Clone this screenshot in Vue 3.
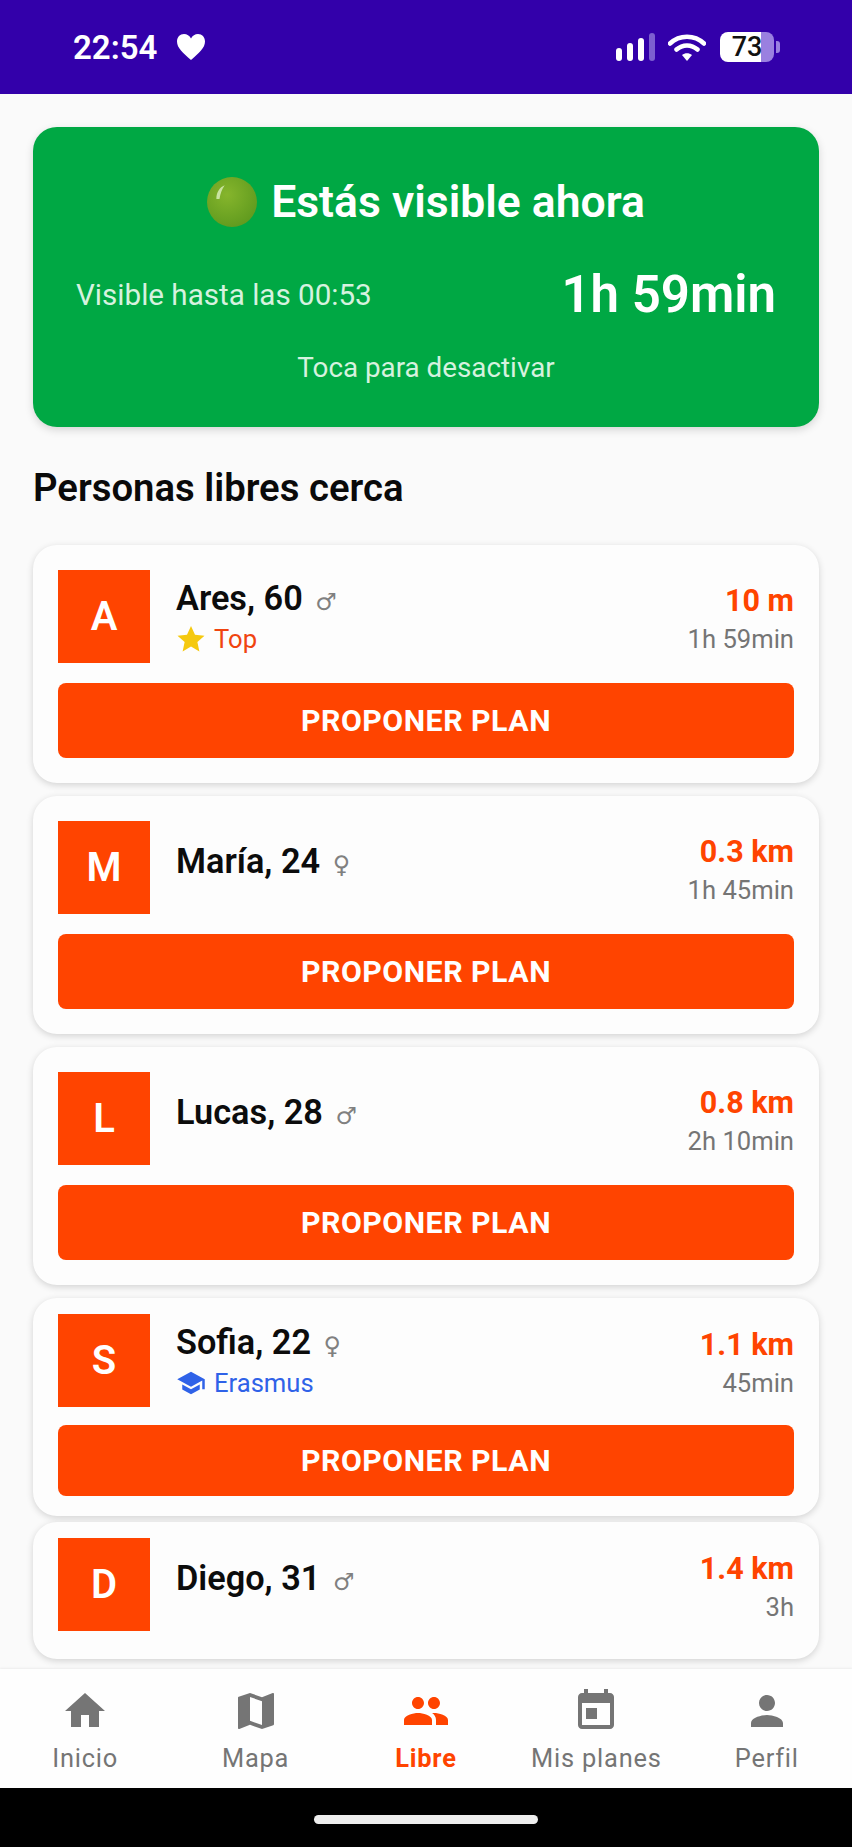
<script setup>
const people = [
  { initial: 'A', name: 'Ares, 60', gender: '♂', tag: 'top', distance: '10 m', time: '1h 59min', button: true },
  { initial: 'M', name: 'María, 24', gender: '♀', distance: '0.3 km', time: '1h 45min', button: true },
  { initial: 'L', name: 'Lucas, 28', gender: '♂', distance: '0.8 km', time: '2h 10min', button: true },
  { initial: 'S', name: 'Sofia, 22', gender: '♀', tag: 'erasmus', distance: '1.1 km', time: '45min', button: true, compact: true },
  { initial: 'D', name: 'Diego, 31', gender: '♂', distance: '1.4 km', time: '3h', button: false, compact: true }
]

const tabs = [
  { label: 'Inicio', path: 'M10 20v-6h4v6h5v-8h3L12 3 2 12h3v8z' },
  { label: 'Mapa', path: 'M20.5 3l-.16.03L15 5.1 9 3 3.36 4.9c-.21.07-.36.25-.36.48V20.5c0 .28.22.5.5.5l.16-.03L9 18.9l6 2.1 5.64-1.9c.21-.07.36-.25.36-.48V3.5c0-.28-.22-.5-.5-.5zM15 19l-6-2.11V5l6 2.11V19z' },
  { label: 'Libre', active: true, path: 'M16 11c1.66 0 2.99-1.34 2.99-3S17.66 5 16 5c-1.66 0-3 1.34-3 3s1.34 3 3 3zm-8 0c1.66 0 2.99-1.34 2.99-3S9.66 5 8 5C6.34 5 5 6.34 5 8s1.34 3 3 3zm0 2c-2.33 0-7 1.17-7 3.5V19h14v-2.5c0-2.33-4.67-3.5-7-3.5zm8 0c-.29 0-.62.02-.97.05 1.16.84 1.97 1.97 1.97 3.45V19h6v-2.5c0-2.33-4.67-3.5-7-3.5z' },
  { label: 'Mis planes', path: 'M12.500 10.500h-5.500v5.500h5.500v-5.500zM16 1v2H8V1H6v2H5c-1.110 0-1.990.9-1.990 2L3 19c0 1.100.89 2 2 2h14c1.100 0 2-.9 2-2V5c0-1.100-.9-2-2-2h-1V1h-2zm3 18H5V8h14v11z' },
  { label: 'Perfil', path: 'M12 12c2.210 0 4-1.790 4-4s-1.790-4-4-4-4 1.790-4 4 1.790 4 4 4zm0 2c-2.670 0-8 1.340-8 4v2h16v-2c0-2.660-5.330-4-8-4z' }
]
</script>

<template>
  <div class="screen">
    <header class="status">
      <span class="status__time">22:54</span>
      <svg class="status__heart" viewBox="0 0 28 26" width="28" height="26">
        <path d="M14 26C6 19 0 14 0 7.500 0 3 3 0 7 0c3 0 5.500 1.500 7 4.500C15.500 1.500 18 0 21 0c4 0 7 3 7 7.500C28 14 22 19 14 26z" fill="#fff" />
      </svg>
      <span class="status__spacer" />
      <svg class="status__signal" viewBox="0 0 39 28" width="39" height="28">
        <rect x="0" y="15" width="6" height="13" rx="3" fill="#fff" />
        <rect x="11" y="10" width="6" height="18" rx="3" fill="#fff" />
        <rect x="22" y="5" width="6" height="23" rx="3" fill="#fff" />
        <rect x="33" y="0" width="6" height="28" rx="3" fill="#7d5fd0" />
      </svg>
      <svg class="status__wifi" viewBox="0 0 38 28" width="38" height="28">
        <path d="M2 10.500C11.500 1.500 26.500 1.500 36 10.500M8.500 16.500C14.500 11 23.500 11 29.500 16.500" fill="none" stroke="#fff" stroke-width="4.500" stroke-linecap="round" />
        <path d="M19 28l-5-6c3-2.500 7-2.500 10 0z" fill="#fff" />
      </svg>
      <div class="status__battery">
        <span class="status__level">73</span>
      </div>
      <i class="status__nub" />
    </header>

    <main class="content">
      <section class="visible">
        <h1 class="visible__title">
          <svg viewBox="0 0 48 48" width="50" height="50">
            <defs>
              <radialGradient id="dot" cx="0.4" cy="0.35" r="0.7">
                <stop offset="0" stop-color="#86b52c" />
                <stop offset="1" stop-color="#5f9a1e" />
              </radialGradient>
            </defs>
            <circle cx="24" cy="24" r="24" fill="url(#dot)" />
            <path d="M9 21c0-6 3-11 8-13-3 4-4 8-5 13z" fill="#c9e3a0" />
          </svg>
          Estás visible ahora
        </h1>
        <div class="visible__row">
          <span class="visible__until">Visible hasta las 00:53</span>
          <strong class="visible__left">1h 59min</strong>
        </div>
        <p class="visible__hint">Toca para desactivar</p>
      </section>

      <h2 class="section-title">Personas libres cerca</h2>

      <div class="list">
        <article
          v-for="person in people"
          :key="person.initial"
          class="card"
          :class="{ 'card--compact': person.compact, 'card--last': !person.button }"
        >
          <div class="card__top">
            <div class="card__avatar">{{ person.initial }}</div>
            <div class="card__info" :class="{ 'card__info--tagged': person.tag }">
              <div class="card__name">{{ person.name }} <i>{{ person.gender }}</i></div>
              <div v-if="person.tag === 'top'" class="tag tag--top">
                <svg viewBox="0 0 24 24" width="30" height="30"><path d="M12 1.500l3.200 7 7.600.8-5.700 5.100 1.600 7.500L12 18l-6.700 3.900 1.600-7.500L1.200 9.300l7.600-.8z" fill="#f5c90f" /></svg>
                Top
              </div>
              <div v-if="person.tag === 'erasmus'" class="tag tag--erasmus">
                <svg viewBox="0 0 24 24" width="30" height="30"><path d="M5 13.180v4L12 21l7-3.820v-4L12 17l-7-3.820zM12 3L1 9l11 6 9-4.910V17h2V9L12 3z" fill="#2f62e8" /></svg>
                Erasmus
              </div>
            </div>
            <div class="card__meta">
              <strong>{{ person.distance }}</strong>
              <span>{{ person.time }}</span>
            </div>
          </div>
          <button v-if="person.button" class="card__button">PROPONER PLAN</button>
        </article>
      </div>
    </main>

    <nav class="tabs">
      <div v-for="tab in tabs" :key="tab.label" class="tab" :class="{ 'tab--active': tab.active }">
        <svg viewBox="0 0 24 24" width="48" height="48"><path :d="tab.path" fill="currentColor" /></svg>
        <span>{{ tab.label }}</span>
      </div>
    </nav>

    <footer class="home-bar"><i /></footer>
  </div>
</template>

<style>
html,
body {
  margin: 0;
  background: #fafafa;
}
</style>

<style scoped>
.screen {
  display: flex;
  flex-direction: column;
  width: 852px;
  height: 1847px;
  overflow: hidden;
  background: #fafafa;
  font-family: Roboto, "Liberation Sans", sans-serif;
}

.status {
  display: flex;
  flex: none;
  align-items: center;
  height: 94px;
  padding: 0 72px 0 73px;
  box-sizing: border-box;
  background: #3300aa;
  color: #fff;
}

.status__time {
  font-size: 33px;
  font-weight: 600;
  line-height: 1;
}

.status__heart {
  margin-left: 20px;
}

.status__spacer {
  flex: 1;
}

.status__wifi {
  margin-left: 13px;
}

.status__battery {
  position: relative;
  width: 54px;
  height: 30px;
  margin-left: 14px;
  border-radius: 8px;
  background: linear-gradient(90deg, #fff 76%, #9a80e0 76%);
}

.status__level {
  display: block;
  color: #111;
  font-size: 27px;
  font-weight: 500;
  line-height: 30px;
  text-align: center;
}

.status__nub {
  width: 4px;
  height: 12px;
  margin-left: 2px;
  border-radius: 0 3px 3px 0;
  background: #9a80e0;
}

.content {
  flex: 1;
  min-height: 0;
  padding: 33px 33px 0;
  overflow: hidden;
}

.visible {
  height: 300px;
  padding: 48px 43px 0;
  box-sizing: border-box;
  border-radius: 24px;
  background: #00a844;
  box-shadow: 0 3px 8px rgba(0, 0, 0, 0.15);
  color: #fff;
}

.visible__title {
  display: flex;
  align-items: center;
  justify-content: center;
  gap: 14px;
  margin: 0;
  font-size: 44.500px;
  font-weight: 600;
  line-height: 54px;
}

.visible__row {
  display: flex;
  align-items: center;
  justify-content: space-between;
  margin-top: 33px;
}

.visible__until {
  color: #d6f2df;
  font-size: 29.600px;
}

.visible__left {
  font-size: 51px;
  font-weight: 600;
  line-height: 66px;
}

.visible__hint {
  margin: 24px 0 0;
  color: #d6f2df;
  font-size: 27.800px;
  line-height: 32px;
  text-align: center;
}

.section-title {
  margin: 40px 0 36px;
  color: #0a0a0a;
  font-size: 38.300px;
  font-weight: 600;
  line-height: 42px;
}

.list {
  display: flex;
  flex-direction: column;
  gap: 13px;
}

.card {
  padding: 25px 25px 25px;
  border-radius: 24px;
  background: #fdfdfd;
  box-shadow: 0 2px 7px rgba(0, 0, 0, 0.16);
}

.card--compact {
  padding: 16px 25px 20px;
}

.card--last {
  margin-top: -7px;
  padding-bottom: 28px;
}

.card__top {
  display: flex;
  align-items: center;
}

.card__avatar {
  display: flex;
  flex: none;
  align-items: center;
  justify-content: center;
  width: 92px;
  height: 93px;
  background: #ff4400;
  color: #fff;
  font-size: 40px;
  font-weight: 600;
}

.card__info {
  flex: 1;
  padding: 0 0 9px 26px;
}

.card__info--tagged {
  padding-bottom: 0;
}

.card__name {
  color: #0c0c0c;
  font-size: 34.300px;
  font-weight: 600;
  line-height: 42px;
  white-space: nowrap;
}

.card__name i {
  margin-left: 4px;
  color: #808080;
  font-family: "DejaVu Sans", sans-serif;
  font-size: 24px;
  font-style: normal;
  font-weight: 400;
}

.tag {
  display: flex;
  align-items: center;
  gap: 8px;
  margin-top: -1px;
  font-size: 25.600px;
  line-height: 34px;
}

.tag--top {
  color: #f0440f;
}

.tag--erasmus {
  color: #2f62e8;
}

.card__meta {
  display: flex;
  flex-direction: column;
  align-items: flex-end;
  padding-top: 6px;
  gap: 4px;
}

.card__meta strong {
  color: #ff4400;
  font-size: 30.500px;
  font-weight: 700;
  line-height: 34px;
}

.card__meta span {
  color: #757575;
  font-size: 25.600px;
  line-height: 34px;
}

.card__button {
  display: block;
  width: 100%;
  height: 75px;
  margin-top: 20px;
  padding: 0;
  border: 0;
  border-radius: 8px;
  background: #ff4400;
  color: #fff;
  font-family: inherit;
  font-size: 30.300px;
  font-weight: 700;
  letter-spacing: 0.5px;
}

.card--compact .card__button {
  height: 71px;
  margin-top: 18px;
}

.tabs {
  display: grid;
  flex: none;
  grid-template-columns: repeat(5, 1fr);
  height: 119px;
  padding-top: 18px;
  box-sizing: border-box;
  background: #fefefe;
  box-shadow: 0 -1px 2px rgba(0, 0, 0, 0.06);
  color: #757575;
}

.tab {
  display: flex;
  flex-direction: column;
  align-items: center;
  font-size: 25.400px;
  letter-spacing: 0.8px;
  line-height: 30px;
  white-space: nowrap;
}

.tab span {
  margin-top: 8px;
}

.tab--active {
  color: #ff4400;
  font-weight: 700;
}

.home-bar {
  display: flex;
  flex: none;
  justify-content: center;
  height: 59px;
  padding-top: 27px;
  box-sizing: border-box;
  background: #000;
}

.home-bar i {
  width: 224px;
  height: 9px;
  border-radius: 5px;
  background: #eee;
}
</style>
